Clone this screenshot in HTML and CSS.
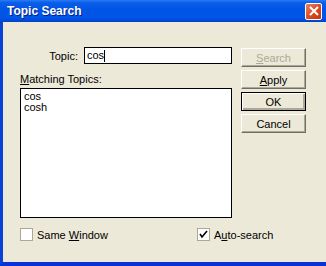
FILE: index.html
```html
<!DOCTYPE html>
<html lang="en">
<head>
  <meta charset="UTF-8" />
  <title>Topic Search</title>
  <link rel="stylesheet" href="styles.css">
</head>
<body>
  <div class="window">
    <div class="titlebar">
      <span class="title">Topic Search</span>
      <button class="close" aria-label="Close">
        <svg width="10" height="10" viewBox="0 0 10 10">
          <path d="M1 1 L9 9 M9 1 L1 9" stroke="#fff" stroke-width="2" />
        </svg>
      </button>
    </div>

    <div class="client">
      <div class="main">
        <div class="left">
          <div class="topic-row">
            <label for="topic">Topic:</label>
            <div class="edit" id="topic">cos<span class="caret"></span></div>
          </div>
          <div class="list-label"><u>M</u>atching Topics:</div>
          <div class="list">
            <div>cos</div>
            <div>cosh</div>
          </div>
        </div>
        <div class="buttons">
          <button class="btn disabled"><u>S</u>earch</button>
          <button class="btn"><u>A</u>pply</button>
          <button class="btn default">OK</button>
          <button class="btn">Cancel</button>
        </div>
      </div>

      <div class="checks">
        <label class="check same"><span class="box"></span><span>Same <u>W</u>indow</span></label>
        <label class="check"><span class="box checked">
          <svg width="9" height="9" viewBox="0 0 9 9"><path d="M1 4 L3 7 L8 1" stroke="#000" stroke-width="1.6" fill="none" /></svg>
        </span><span>A<u>u</u>to-search</span></label>
      </div>
    </div>
  </div>
</body>
</html>
```

FILE: styles.css
```css
body {
  margin: 0;
  font-family: "Liberation Sans", Arial, sans-serif;
  font-size: 11px;
  color: #000;
  overflow: hidden;
}
.window {
  width: 323px;
  height: 262px;
  background: #ece9d8;
  border-left: 3px solid #0842d6;
  border-bottom: 4px solid #0831d9;
}
.titlebar {
  height: 22px;
  margin-left: -3px;
  padding-left: 7px;
  display: flex;
  align-items: center;
  background: linear-gradient(#2a7cf5 0%, #0a5ee8 12%, #0055e5 45%, #0154e8 80%, #0242c8 100%);
}
.title {
  color: #fff;
  font-weight: bold;
  font-size: 12px;
  text-shadow: 1px 1px #0a1e8c;
  flex: 1;
}
.close {
  width: 17px;
  height: 17px;
  margin-right: 4px;
  padding: 0;
  border: 1px solid #fff;
  border-radius: 2px;
  background: linear-gradient(135deg, #e9835f, #d8451f 60%, #c33512);
  display: flex;
  align-items: center;
  justify-content: center;
}
.client {
  padding: 25px 0 0 17px;
}
.main {
  display: flex;
  gap: 9px;
}
.left {
  width: 212px;
}
.topic-row {
  display: flex;
  align-items: center;
  justify-content: flex-end;
  gap: 6px;
}
.edit {
  width: 144px;
  height: 15px;
  border: 1px solid #000;
  background: #fff;
  padding-left: 2px;
  line-height: 15px;
  display: flex;
  align-items: center;
}
.caret {
  display: inline-block;
  width: 1px;
  height: 12px;
  background: #000;
}
.list-label {
  margin-top: 9px;
  height: 15px;
}
.list {
  border: 1px solid #000;
  background: #fff;
  padding: 2px 3px;
  box-sizing: border-box;
  height: 130px;
  line-height: 11px;
}
.buttons {
  width: 65px;
  display: flex;
  flex-direction: column;
  gap: 3px;
  padding-top: 1px;
}
.btn {
  height: 19px;
  padding: 0;
  font-family: inherit;
  font-size: 11px;
  background: #ece9d8;
  border: 1px solid;
  border-color: #fff #716f64 #716f64 #fff;
  box-shadow: inset -1px -1px #aca899;
  color: #000;
}
.btn.disabled {
  color: #aca899;
}
.btn.default {
  border-color: #000;
  box-shadow: inset 1px 1px #fff, inset -2px -2px #aca899, inset -1px -1px #716f64;
}
.checks {
  display: flex;
  margin-top: 10px;
}
.check {
  display: flex;
  align-items: center;
  gap: 4px;
}
.check.same {
  width: 177px;
  flex-shrink: 0;
}
.box {
  width: 11px;
  height: 11px;
  border: 1px solid #aca899;
  background: #fff;
  display: flex;
  align-items: center;
  justify-content: center;
}
```
